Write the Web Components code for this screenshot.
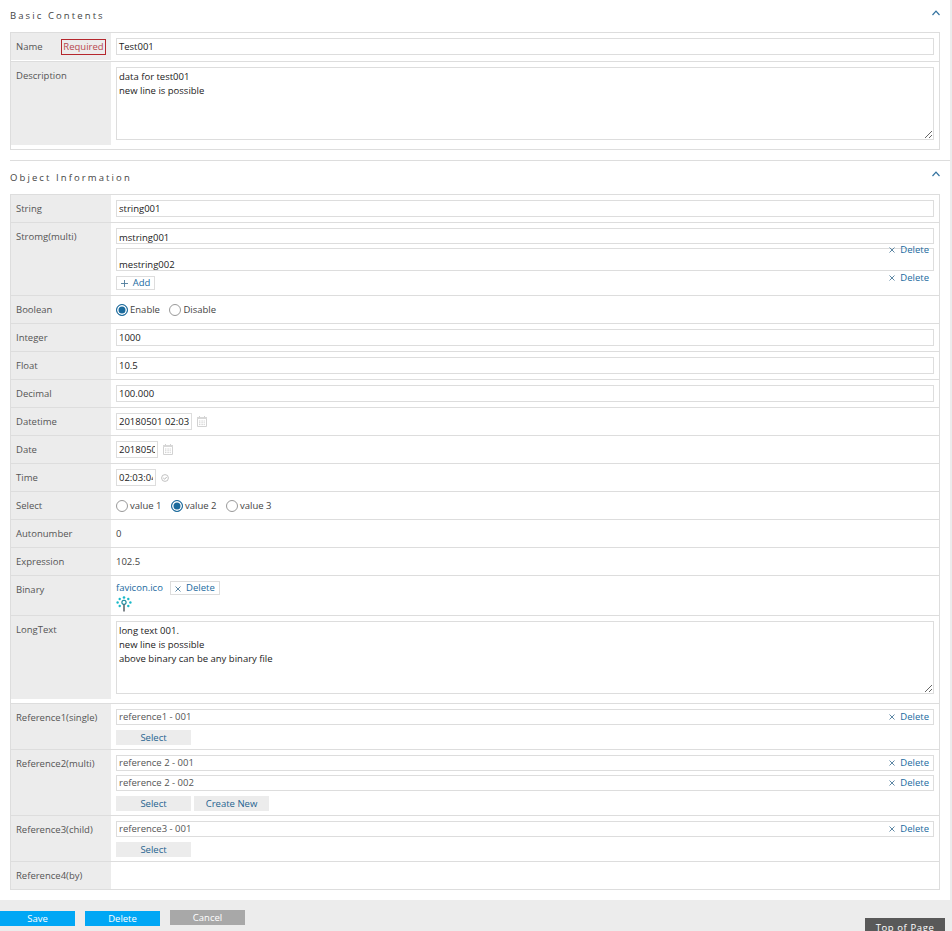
<!DOCTYPE html>
<html lang="en">
<head>
<meta charset="utf-8">
<title>Edit</title>
<style>
  html, body { margin: 0; height: 931px; overflow: hidden; }
  body { background: #ececec; font: 9.5px "Open Sans", sans-serif; color: #333; }
  main { display: block; width: 950px; height: 900px; background: #fff; }
</style>
</head>
<body>
<script>
// Small helper so every element reads the same way
function define(name, css, html, setup) {
  customElements.define(name, class extends HTMLElement {
    constructor() {
      super();
      this.attachShadow({ mode: 'open' });
      const tpl = document.createElement('template');
      tpl.innerHTML = `<style>${css}</style>${html}`;
      this.shadowRoot.appendChild(tpl.content.cloneNode(true));
    }
    connectedCallback() {
      if (setup) setup(this, this.shadowRoot);
    }
  });
}

const DEL_ICON = `<svg width="6" height="6" viewBox="0 0 6 6"><path d="M.5.5l5 5M5.5.5l-5 5" stroke="#4d7a9b" stroke-width=".9" fill="none"/></svg>`;
const PLUS_ICON = `<svg slot="icon" width="7" height="7" viewBox="0 0 7 7"><path d="M3.5 0v7M0 3.5h7" stroke="#4d7a9b" stroke-width=".9" fill="none"/></svg>`;

define('form-section', `
  :host { display: block; padding: 0 10px 10px; }
  :host([divided]) { border-top: 1px solid #ddd; margin-left: 10px; padding-left: 0; }
  header { display: flex; justify-content: space-between; align-items: center; height: 32px; }
  :host([divided]) header { height: 33px; }
  h2 { margin: -2px 0 0; font-size: 9.5px; font-weight: 400; letter-spacing: 2.1px; color: #444; }
  :host([divided]) h2 { margin-top: 0; }
  svg { display: block; margin-top: -7px; }
  .table { border: 1px solid #ddd; border-bottom: 0; width: 928px; }
`, `
  <header><h2></h2>
    <svg width="8" height="6" viewBox="0 0 8 6"><path d="M.5 5L4 1.2 7.5 5" fill="none" stroke="#33729f" stroke-width="1.2"/></svg>
  </header>
  <div class="table"><slot></slot></div>
`, (el, root) => { root.querySelector('h2').textContent = el.getAttribute('heading'); });

define('form-row', `
  :host { display: grid; grid-template-columns: 100px 1fr; border-bottom: 1px solid #ddd; }
  .label { background: #ececec; padding: 6px 5px 0 5px; color: #555; display: flex; justify-content: space-between; align-items: flex-start; line-height: 15px; }
  .value { padding: 5px; min-width: 0; display: flex; flex-direction: column; align-items: stretch; min-height: 17px; }
`, `
  <div class="label"><span></span><slot name="tag"></slot></div>
  <div class="value"><slot></slot></div>
`, (el, root) => { root.querySelector('span').textContent = el.getAttribute('label'); });

define('req-tag', `
  :host { display: block; box-sizing: border-box; width: 45px; text-align: center; border: 1px solid #b5272d; color: #b8474c; height: 16px; line-height: 14px; }
`, `<slot></slot>`);

define('text-field', `
  :host { display: block; box-sizing: border-box; height: 17px; border: 1px solid #ddd; padding: 0 2px; line-height: 16px; color: #222; white-space: nowrap; overflow: hidden; }
`, `<slot></slot>`);

define('area-field', `
  :host { display: block; }
  textarea { display: block; box-sizing: border-box; width: 100%; border: 1px solid #ddd; border-radius: 0; padding: 2px; margin: 0; font: inherit; line-height: 14px; color: #222; outline: 0; }
`, `<textarea></textarea>`, (el, root) => {
  const t = root.querySelector('textarea');
  t.value = el.textContent.trim().replace(/\n\s+/g, '\n');
  t.style.height = el.getAttribute('h') + 'px';
  el.textContent = '';
});

define('del-link', `
  :host { display: inline-flex; align-items: center; gap: 5px; color: #1a6aa0; line-height: 12px; }
`, DEL_ICON + `<slot>Delete</slot>`);

// A field that carries a Delete link; the link sits over the field
define('item-field', `
  :host { display: block; position: relative; box-sizing: border-box; height: 16px; border: 1px solid #ddd; padding: 0 2px; line-height: 14px; color: #555; white-space: nowrap; }
  del-link { position: absolute; right: 4px; top: 1px; }
`, `<slot></slot><del-link></del-link>`);

define('multi-string', `
  :host { display: block; position: relative; }
  .one { box-sizing: border-box; border: 1px solid #ddd; padding: 0 2px; color: #222; display: flex; align-items: flex-end; line-height: 14px; }
  .one div { margin-bottom: -2px; }
  .a { height: 16px; margin-bottom: 4px; }
  .b { height: 23px; margin-bottom: 5px; }
  del-link { position: absolute; right: 5px; }
  .d1 { top: 16px; }
  .d2 { top: 44px; }
`, `
  <div class="one a"><div><slot name="a"></slot></div></div>
  <div class="one b"><div><slot name="b"></slot></div></div>
  <slot></slot>
  <del-link class="d1"></del-link>
  <del-link class="d2"></del-link>
`);

define('line-button', `
  :host { display: inline-flex; align-items: center; justify-content: center; gap: 5px; box-sizing: border-box; border: 1px solid #ddd; color: #1a6aa0; height: 14px; line-height: 12px; }
`, `<slot name="icon"></slot><slot></slot>`);

define('ref-button', `
  :host { display: inline-block; width: 75px; height: 15px; line-height: 15px; background: #ececec; color: #1f6390; text-align: center; }
`, `<slot></slot>`);

define('radio-group', `
  :host { display: flex; gap: 9.5px; height: 17px; align-items: center; }
`, `<slot></slot>`);

define('radio-option', `
  :host { display: inline-flex; align-items: center; gap: 2px; color: #444; line-height: 14px; }
  i { box-sizing: border-box; width: 12px; height: 12px; border: 1px solid #999; border-radius: 50%; display: block; background: #fff; }
  :host([checked]) i { border-color: #1b6a9c; background: #1b6a9c; box-shadow: inset 0 0 0 1.5px #fff; }
`, `<i></i><slot></slot>`);

define('date-field', `
  :host { display: flex; align-items: center; gap: 5px; height: 17px; }
  .box { box-sizing: border-box; height: 17px; border: 1px solid #ddd; padding: 0 2px; line-height: 16px; color: #222; overflow: clip; overflow-clip-margin: content-box; white-space: nowrap; }
  svg { display: block; }
`, `<div class="box"><slot></slot></div><slot name="icon"></slot>`, (el, root) => {
  root.querySelector('.box').style.width = el.getAttribute('w') + 'px';
});

define('plain-value', `
  :host { display: block; line-height: 17px; color: #444; }
`, `<slot></slot>`);

define('binary-value', `
  :host { display: block; height: 30px; margin-top: -1px; }
  .top { display: flex; align-items: center; gap: 7px; height: 15px; }
  line-button { width: 50px; margin-top: 1px; }
  a { color: #1a6aa0; }
  svg { display: block; margin-top: 1px; }
`, `
  <div class="top"><a><slot></slot></a><line-button><span slot="icon" style="display:flex">${DEL_ICON}</span>Delete</line-button></div>
  <svg width="16" height="16" viewBox="0 0 16 16">
    <g fill="#19b9c9">
      <circle cx="8" cy="1.5" r="1.3"/><circle cx="3.7" cy="3" r="1.2"/><circle cx="12.3" cy="3" r="1.2"/>
      <circle cx="1.6" cy="6.5" r="1.2"/><circle cx="14.4" cy="6.5" r="1.2"/><circle cx="3.7" cy="10" r="1.2"/><circle cx="12.3" cy="10" r="1.2"/>
    </g>
    <circle cx="8" cy="6.3" r="2.1" fill="none" stroke="#17889b" stroke-width="1.1"/>
    <path d="M8 8.5V15.5" stroke="#555f66" stroke-width="1.5"/>
  </svg>
`);

define('button-row', `
  :host { display: flex; gap: 3px; margin-top: 5px; margin-bottom: -1px; }
`, `<slot></slot>`);

define('page-footer', `
  :host { display: block; position: relative; height: 31px; }
  .btn { position: absolute; width: 75px; height: 15px; line-height: 15px; text-align: center; color: #fff; background: #00a7f5; }
  .save { left: 0; top: 11px; }
  .del { left: 85px; top: 11px; }
  .cancel { left: 170px; top: 10px; background: #a8a8a8; }
  .top { position: absolute; left: 865px; top: 18px; width: 80px; height: 20px; line-height: 19px; text-align: center; background: #595959; color: #fff; letter-spacing: .6px; }
`, `
  <div class="btn save">Save</div><div class="btn del">Delete</div><div class="btn cancel">Cancel</div>
  <div class="top">Top of Page</div>
`);

const CAL = `<svg slot="icon" width="10" height="11" viewBox="0 0 10 11" style="display:block"><path d="M.5 1.5h9v9h-9z" fill="none" stroke="#d2d2d2"/><path d="M0 1h10v2H0z" fill="#d8d8d8"/><path d="M2.5 0v1.5M7.5 0v1.5" stroke="#d2d2d2"/><path d="M2 5h6M2 6.8h6M2 8.6h6" stroke="#d0d0d0" stroke-dasharray="1 .6"/></svg>`;
const CLOCK = `<svg slot="icon" width="8" height="8" viewBox="0 0 8 8" style="display:block"><circle cx="4" cy="4" r="3.4" fill="none" stroke="#bbb" stroke-width=".9"/><path d="M2.3 4l1.3 1.2 2.1-2.2" fill="none" stroke="#aaa" stroke-width=".9"/></svg>`;

document.body.insertAdjacentHTML('afterbegin', `
<main>
  <form-section heading="Basic Contents">
    <form-row label="Name" style="padding-bottom:1px"><req-tag slot="tag">Required</req-tag><text-field>Test001</text-field></form-row>
    <form-row label="Description" style="padding-bottom:4px"><area-field h="73">data for test001
      new line is possible</area-field></form-row>
  </form-section>
  <form-section heading="Object Information" divided>
    <form-row label="String"><text-field>string001</text-field></form-row>
    <form-row label="Stromg(multi)"><multi-string>
      <span slot="a">mstring001</span><span slot="b">mestring002</span>
      <line-button style="width:39px">${PLUS_ICON}Add</line-button>
    </multi-string></form-row>
    <form-row label="Boolean"><radio-group><radio-option checked>Enable</radio-option><radio-option>Disable</radio-option></radio-group></form-row>
    <form-row label="Integer"><text-field>1000</text-field></form-row>
    <form-row label="Float"><text-field>10.5</text-field></form-row>
    <form-row label="Decimal"><text-field>100.000</text-field></form-row>
    <form-row label="Datetime"><date-field w="76">20180501 02:03${CAL}</date-field></form-row>
    <form-row label="Date"><date-field w="42">20180501${CAL}</date-field></form-row>
    <form-row label="Time"><date-field w="40">02:03:04${CLOCK}</date-field></form-row>
    <form-row label="Select"><radio-group><radio-option>value 1</radio-option><radio-option checked>value 2</radio-option><radio-option>value 3</radio-option></radio-group></form-row>
    <form-row label="Autonumber"><plain-value>0</plain-value></form-row>
    <form-row label="Expression"><plain-value>102.5</plain-value></form-row>
    <form-row label="Binary"><binary-value>favicon.ico</binary-value></form-row>
    <form-row label="LongText" style="padding-bottom:4px"><area-field h="73">long text 001.
      new line is possible
      above binary can be any binary file</area-field></form-row>
    <form-row label="Reference1(single)"><item-field>reference1 - 001</item-field><button-row><ref-button>Select</ref-button></button-row></form-row>
    <form-row label="Reference2(multi)"><item-field style="margin-bottom:4px">reference 2 - 001</item-field><item-field>reference 2 - 002</item-field><button-row><ref-button>Select</ref-button><ref-button>Create New</ref-button></button-row></form-row>
    <form-row label="Reference3(child)"><item-field>reference3 - 001</item-field><button-row><ref-button>Select</ref-button></button-row></form-row>
    <form-row label="Reference4(by)"><plain-value></plain-value></form-row>
  </form-section>
</main>
<page-footer></page-footer>
`);
</script>
</body>
</html>
